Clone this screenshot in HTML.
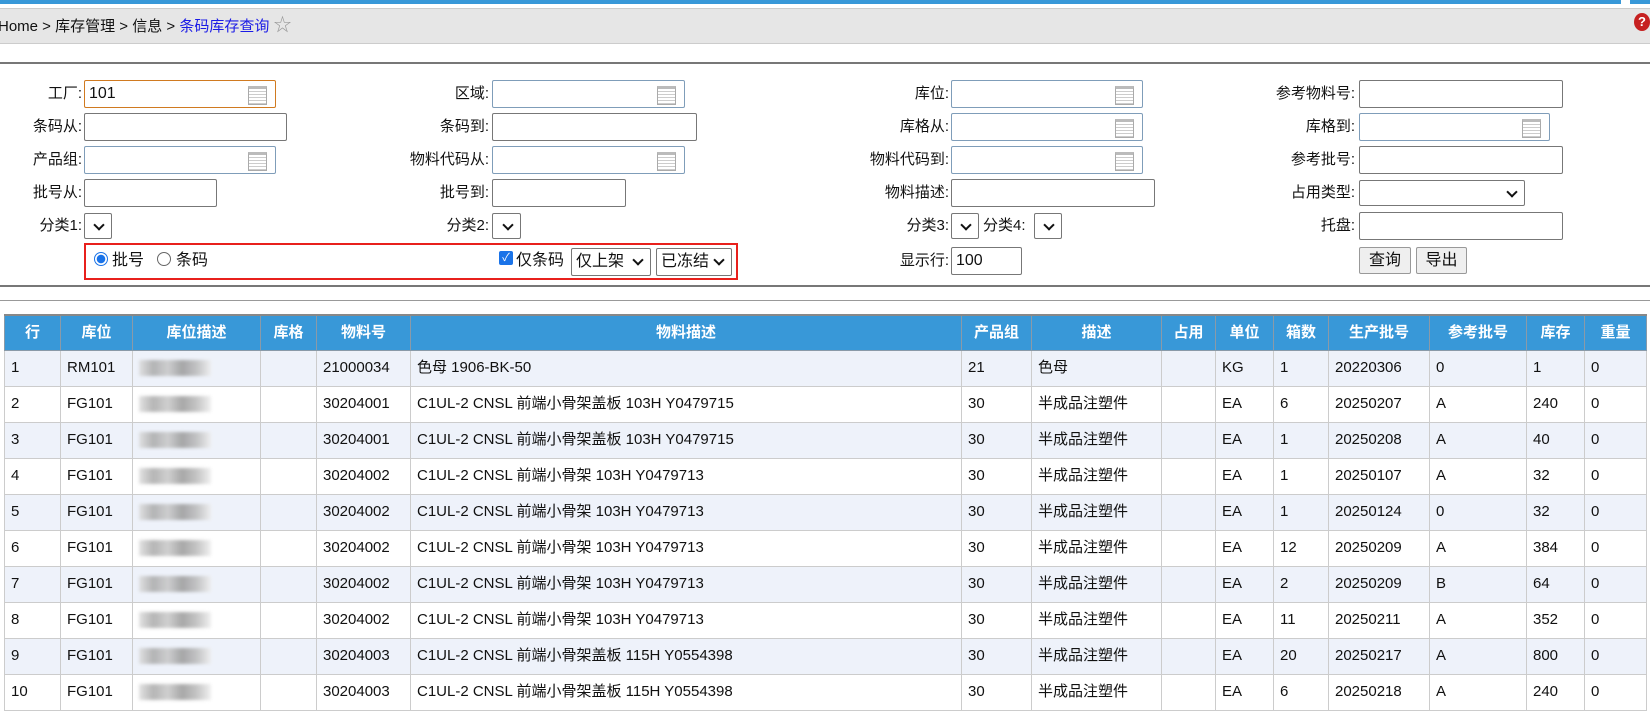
<!DOCTYPE html>
<html><head><meta charset="utf-8"><style>
*{box-sizing:border-box;margin:0;padding:0}
body{width:1650px;height:707px;overflow:hidden;background:#fff;font-family:"Liberation Sans","Noto Sans CJK SC",sans-serif;font-size:15px;color:#111;position:relative}
.a{position:absolute}
.lbl{position:absolute;text-align:right;white-space:nowrap;line-height:28px}
.in{position:absolute;height:28px;border:1px solid #777;border-radius:2px;background:#fff;font-size:16px;line-height:26px;padding-left:4px}
.lk{border-color:#7f9db9}
.lk::after{content:"";position:absolute;right:8px;top:5px;width:17px;height:15px;border:1px solid #aaa;background:repeating-linear-gradient(#fff 0 2px,#ccc 2px 3px);border-top:3px solid #bbb}
.sel{position:absolute;height:26px;border:1px solid #777;border-radius:2px;background:#fff}
.sel::after{content:"";position:absolute;right:8px;top:7px;width:6px;height:6px;border-right:2px solid #111;border-bottom:2px solid #111;transform:rotate(45deg)}
.btn{position:absolute;height:27px;border:1px solid #999;border-radius:2px;background:#efefef;font-size:16px;line-height:25px;text-align:center}
table{position:absolute;left:4px;top:314px;border-collapse:collapse;table-layout:fixed}
th{background:#3898d8;color:#fff;font-weight:bold;height:35px;border:1px solid #8a9aa8;border-top:2px solid #888;font-size:15px;line-height:20px}
td{height:36px;border:1px solid #ccc;padding:0 0 0 6px;white-space:nowrap;font-size:15px;line-height:20px;vertical-align:middle}
td span.t{display:inline-block;height:20px;line-height:20px;vertical-align:middle}
tr:nth-child(even) td{background:#eef2fa}
.bl{display:inline-block;width:72px;height:16px;vertical-align:middle;background:linear-gradient(90deg,#ddd,#a9a9a9 20%,#c8c8c8 40%,#999 60%,#bbb 80%,#eee);filter:blur(1.5px);opacity:.85}
</style></head><body>
<div class="a" style="left:0;top:0;width:1621px;height:4px;background:#3898d8"></div>
<div class="a" style="left:1630px;top:0;width:20px;height:4px;background:#3898d8"></div>
<div class="a" style="left:0;top:8px;width:1650px;height:36px;background:#e6e6e6;border-top:1px solid #ccc;border-bottom:1px solid #ccc"></div>
<div class="a" style="left:-2px;top:14px;line-height:22px;font-size:15px">Home &gt; 库存管理 &gt; 信息 &gt; <span style="color:#1a1ae6">条码库存查询</span> <span style="color:#999;font-size:18px">☆</span></div>
<div class="a" style="left:1634px;top:13px;width:16px;height:18px;border-radius:50%;background:#c62020;color:#fff;font-weight:bold;font-size:13px;text-align:center;line-height:18px">?</div>
<div class="a" style="left:0;top:62px;width:1650px;height:2px;background:#777"></div>

<div class="lbl" style="right:1568px;top:80px">工厂:</div><div class="in lk" style="left:84px;top:80px;width:192px;border-color:#d07a20">101</div>
<div class="lbl" style="right:1568px;top:113px">条码从:</div><div class="in" style="left:84px;top:113px;width:203px"></div>
<div class="lbl" style="right:1568px;top:146px">产品组:</div><div class="in lk" style="left:84px;top:146px;width:192px"></div>
<div class="lbl" style="right:1568px;top:179px">批号从:</div><div class="in" style="left:84px;top:179px;width:133px"></div>
<div class="lbl" style="right:1568px;top:212px">分类1:</div><div class="sel" style="left:84px;top:213px;width:28px"></div>

<div class="lbl" style="right:1161px;top:80px">区域:</div><div class="in lk" style="left:492px;top:80px;width:193px"></div>
<div class="lbl" style="right:1161px;top:113px">条码到:</div><div class="in" style="left:492px;top:113px;width:205px"></div>
<div class="lbl" style="right:1161px;top:146px">物料代码从:</div><div class="in lk" style="left:492px;top:146px;width:193px"></div>
<div class="lbl" style="right:1161px;top:179px">批号到:</div><div class="in" style="left:492px;top:179px;width:134px"></div>
<div class="lbl" style="right:1161px;top:212px">分类2:</div><div class="sel" style="left:492px;top:213px;width:29px"></div>

<div class="a" style="left:84px;top:243px;width:654px;height:37px;border:2px solid #e8201c"></div>
<div class="a" style="left:94px;top:252px;width:14px;height:14px;border-radius:50%;border:1px solid #1a73e8;background:radial-gradient(#1a73e8 0 4px,#fff 4.5px)"></div>
<div class="a" style="left:112px;top:250px;line-height:22px;font-size:16px">批号</div>
<div class="a" style="left:157px;top:252px;width:14px;height:14px;border-radius:50%;border:1px solid #666;background:#fff"></div>
<div class="a" style="left:176px;top:250px;line-height:22px;font-size:16px">条码</div>
<div class="a" style="left:499px;top:251px;width:14px;height:14px;border-radius:2px;background:#1a73e8;color:#fff;font-size:11px;line-height:14px;text-align:center">✓</div>
<div class="a" style="left:516px;top:250px;line-height:22px;font-size:16px">仅条码</div>
<div class="sel" style="left:571px;top:248px;width:80px;height:28px;font-size:16px;line-height:26px;padding-left:4px">仅上架</div>
<div class="sel" style="left:656px;top:248px;width:76px;height:28px;font-size:16px;line-height:26px;padding-left:4px">已冻结</div>

<div class="lbl" style="right:701px;top:80px">库位:</div><div class="in lk" style="left:951px;top:80px;width:192px"></div>
<div class="lbl" style="right:701px;top:113px">库格从:</div><div class="in lk" style="left:951px;top:113px;width:192px"></div>
<div class="lbl" style="right:701px;top:146px">物料代码到:</div><div class="in lk" style="left:951px;top:146px;width:192px"></div>
<div class="lbl" style="right:701px;top:179px">物料描述:</div><div class="in" style="left:951px;top:179px;width:204px"></div>
<div class="lbl" style="right:701px;top:212px">分类3:</div><div class="sel" style="left:951px;top:213px;width:28px"></div>
<div class="lbl" style="left:983px;top:212px">分类4:</div><div class="sel" style="left:1034px;top:213px;width:28px"></div>
<div class="lbl" style="right:701px;top:247px">显示行:</div><div class="in" style="left:951px;top:247px;width:71px">100</div>

<div class="lbl" style="right:295px;top:80px">参考物料号:</div><div class="in" style="left:1359px;top:80px;width:204px"></div>
<div class="lbl" style="right:295px;top:113px">库格到:</div><div class="in lk" style="left:1359px;top:113px;width:191px"></div>
<div class="lbl" style="right:295px;top:146px">参考批号:</div><div class="in" style="left:1359px;top:146px;width:204px"></div>
<div class="lbl" style="right:295px;top:179px">占用类型:</div><div class="sel" style="left:1359px;top:180px;width:166px"></div>
<div class="lbl" style="right:295px;top:212px">托盘:</div><div class="in" style="left:1359px;top:212px;width:204px"></div>
<div class="btn" style="left:1359px;top:247px;width:52px">查询</div>
<div class="btn" style="left:1416px;top:247px;width:51px">导出</div>

<div class="a" style="left:0;top:285px;width:1650px;height:2px;background:#777"></div>
<div class="a" style="left:0;top:300px;width:1650px;height:1px;background:#999"></div>

<table>
<colgroup><col style="width:56px"><col style="width:72px"><col style="width:128px"><col style="width:56px"><col style="width:94px"><col style="width:551px"><col style="width:70px"><col style="width:130px"><col style="width:54px"><col style="width:58px"><col style="width:55px"><col style="width:101px"><col style="width:97px"><col style="width:58px"><col style="width:62px"></colgroup>
<tr><th>行</th><th>库位</th><th>库位描述</th><th>库格</th><th>物料号</th><th>物料描述</th><th>产品组</th><th>描述</th><th>占用</th><th>单位</th><th>箱数</th><th>生产批号</th><th>参考批号</th><th>库存</th><th>重量</th></tr>
<tr><td>1</td><td>RM101</td><td><span class="bl"></span></td><td></td><td>21000034</td><td><span class="t">色母 1906-BK-50</span></td><td>21</td><td><span class="t">色母</span></td><td></td><td>KG</td><td>1</td><td>20220306</td><td>0</td><td>1</td><td>0</td></tr>
<tr><td>2</td><td>FG101</td><td><span class="bl"></span></td><td></td><td>30204001</td><td><span class="t">C1UL-2 CNSL 前端小骨架盖板 103H Y0479715</span></td><td>30</td><td><span class="t">半成品注塑件</span></td><td></td><td>EA</td><td>6</td><td>20250207</td><td>A</td><td>240</td><td>0</td></tr>
<tr><td>3</td><td>FG101</td><td><span class="bl"></span></td><td></td><td>30204001</td><td><span class="t">C1UL-2 CNSL 前端小骨架盖板 103H Y0479715</span></td><td>30</td><td><span class="t">半成品注塑件</span></td><td></td><td>EA</td><td>1</td><td>20250208</td><td>A</td><td>40</td><td>0</td></tr>
<tr><td>4</td><td>FG101</td><td><span class="bl"></span></td><td></td><td>30204002</td><td><span class="t">C1UL-2 CNSL 前端小骨架 103H Y0479713</span></td><td>30</td><td><span class="t">半成品注塑件</span></td><td></td><td>EA</td><td>1</td><td>20250107</td><td>A</td><td>32</td><td>0</td></tr>
<tr><td>5</td><td>FG101</td><td><span class="bl"></span></td><td></td><td>30204002</td><td><span class="t">C1UL-2 CNSL 前端小骨架 103H Y0479713</span></td><td>30</td><td><span class="t">半成品注塑件</span></td><td></td><td>EA</td><td>1</td><td>20250124</td><td>0</td><td>32</td><td>0</td></tr>
<tr><td>6</td><td>FG101</td><td><span class="bl"></span></td><td></td><td>30204002</td><td><span class="t">C1UL-2 CNSL 前端小骨架 103H Y0479713</span></td><td>30</td><td><span class="t">半成品注塑件</span></td><td></td><td>EA</td><td>12</td><td>20250209</td><td>A</td><td>384</td><td>0</td></tr>
<tr><td>7</td><td>FG101</td><td><span class="bl"></span></td><td></td><td>30204002</td><td><span class="t">C1UL-2 CNSL 前端小骨架 103H Y0479713</span></td><td>30</td><td><span class="t">半成品注塑件</span></td><td></td><td>EA</td><td>2</td><td>20250209</td><td>B</td><td>64</td><td>0</td></tr>
<tr><td>8</td><td>FG101</td><td><span class="bl"></span></td><td></td><td>30204002</td><td><span class="t">C1UL-2 CNSL 前端小骨架 103H Y0479713</span></td><td>30</td><td><span class="t">半成品注塑件</span></td><td></td><td>EA</td><td>11</td><td>20250211</td><td>A</td><td>352</td><td>0</td></tr>
<tr><td>9</td><td>FG101</td><td><span class="bl"></span></td><td></td><td>30204003</td><td><span class="t">C1UL-2 CNSL 前端小骨架盖板 115H Y0554398</span></td><td>30</td><td><span class="t">半成品注塑件</span></td><td></td><td>EA</td><td>20</td><td>20250217</td><td>A</td><td>800</td><td>0</td></tr>
<tr><td>10</td><td>FG101</td><td><span class="bl"></span></td><td></td><td>30204003</td><td><span class="t">C1UL-2 CNSL 前端小骨架盖板 115H Y0554398</span></td><td>30</td><td><span class="t">半成品注塑件</span></td><td></td><td>EA</td><td>6</td><td>20250218</td><td>A</td><td>240</td><td>0</td></tr>
</table>
</body></html>
